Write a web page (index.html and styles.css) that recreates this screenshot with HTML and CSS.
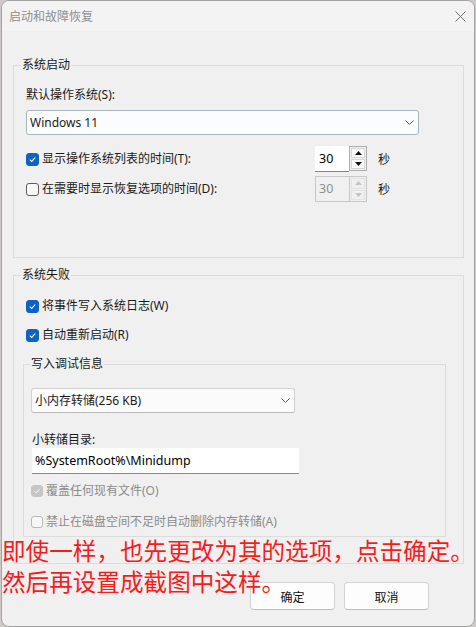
FILE: index.html
```html
<!DOCTYPE html>
<html lang="zh-CN">
<head>
<meta charset="utf-8">
<title>启动和故障恢复</title>
<link rel="stylesheet" href="styles.css">
</head>
<body>
<div class="window">
  <div class="titlebar">
    <span class="title">启动和故障恢复</span>
    <svg class="close" width="11" height="11" viewBox="0 0 11 11"><path d="M0.5 0.5 L10.5 10.5 M10.5 0.5 L0.5 10.5" stroke="#707070" stroke-width="1" fill="none"/></svg>
  </div>
  <div class="content">
    <div class="group g1">
      <div class="gtitle">系统启动</div>
      <div class="label lbl-os">默认操作系统(S):</div>
      <div class="combo combo-os">
        <span>Windows 11</span>
        <svg class="chev" width="9" height="5" viewBox="0 0 9 5"><path d="M0.5 0.5 L4.5 4.5 L8.5 0.5" stroke="#555" stroke-width="1" fill="none"/></svg>
      </div>
      <div class="timer-row r1">
        <div class="check tcheck">
          <span class="box checked"><svg width="13" height="13" viewBox="0 0 13 13"><path d="M3.3 6.7 L5.5 8.8 L9.7 4.4" stroke="#fff" stroke-width="1.2" fill="none"/></svg></span>
          <span>显示操作系统列表的时间(T):</span>
        </div>
        <div class="spin">
          <span class="spin-val">30</span>
          <span class="spin-btns">
            <span class="sb"><svg width="7" height="4" viewBox="0 0 7 4"><polygon points="0,4 3.5,0 7,4" fill="#111"/></svg></span>
            <span class="sb"><svg width="7" height="4" viewBox="0 0 7 4"><polygon points="0,0 3.5,4 7,0" fill="#111"/></svg></span>
          </span>
        </div>
        <span class="unit">秒</span>
      </div>
      <div class="timer-row r2">
        <div class="check tcheck">
          <span class="box"></span>
          <span>在需要时显示恢复选项的时间(D):</span>
        </div>
        <div class="spin spin-off">
          <span class="spin-val">30</span>
          <span class="spin-btns">
            <span class="sb"><svg width="7" height="4" viewBox="0 0 7 4"><polygon points="0,4 3.5,0 7,4" fill="#c4c4c4"/></svg></span>
            <span class="sb"><svg width="7" height="4" viewBox="0 0 7 4"><polygon points="0,0 3.5,4 7,0" fill="#c4c4c4"/></svg></span>
          </span>
        </div>
        <span class="unit">秒</span>
      </div>
    </div>

    <div class="group g2">
      <div class="gtitle">系统失败</div>
      <div class="check frow rw">
        <span class="box checked"><svg width="13" height="13" viewBox="0 0 13 13"><path d="M3.3 6.7 L5.5 8.8 L9.7 4.4" stroke="#fff" stroke-width="1.2" fill="none"/></svg></span>
        <span>将事件写入系统日志(W)</span>
      </div>
      <div class="check frow rr">
        <span class="box checked"><svg width="13" height="13" viewBox="0 0 13 13"><path d="M3.3 6.7 L5.5 8.8 L9.7 4.4" stroke="#fff" stroke-width="1.2" fill="none"/></svg></span>
        <span>自动重新启动(R)</span>
      </div>
      <div class="group g3">
        <div class="gtitle">写入调试信息</div>
        <div class="combo combo-dump">
          <span>小内存转储(256 KB)</span>
          <svg class="chev" width="9" height="5" viewBox="0 0 9 5"><path d="M0.5 0.5 L4.5 4.5 L8.5 0.5" stroke="#555" stroke-width="1" fill="none"/></svg>
        </div>
        <div class="label lbl-dir">小转储目录:</div>
        <div class="textbox">%SystemRoot%\Minidump</div>
        <div class="check disabled drow d1">
          <span class="box checked-off"><svg width="12" height="12" viewBox="0 0 12 12"><path d="M3 6.2 L5 8.2 L9 4" stroke="#fff" stroke-width="1.2" fill="none"/></svg></span>
          <span>覆盖任何现有文件(O)</span>
        </div>
        <div class="check disabled drow d2">
          <span class="box box-off"></span>
          <span>禁止在磁盘空间不足时自动删除内存转储(A)</span>
        </div>
      </div>
    </div>

    <div class="buttons">
      <button class="btn">确定</button>
      <button class="btn">取消</button>
    </div>
  </div>
  <div class="note">即使一样，也先更改为其的选项，点击确定。<br>然后再设置成截图中这样。</div>
</div>
</body>
</html>
```
FILE: styles.css
```css
html, body {
  margin: 0;
  padding: 0;
}
body {
  background: #cfc9c9;
  font-family: "Noto Sans", "Noto Sans CJK SC", sans-serif;
  font-size: 12px;
  line-height: 16px;
  color: #1a1a1a;
  width: 476px;
  height: 627px;
  overflow: hidden;
}
.window {
  position: relative;
  box-sizing: border-box;
  margin-left: 1px;
  width: 474px;
  height: 627px;
  border: 1px solid #a3a3a3;
  border-radius: 8px;
  background: #f0f0f0;
  overflow: hidden;
}
.titlebar {
  height: 30px;
  background: #f3f3f3;
  display: flex;
  align-items: center;
  justify-content: space-between;
  padding-left: 7px;
  padding-right: 8px;
}
.title {
  color: #8f8f8f;
  font-family: "Noto Sans CJK SC", sans-serif;
}
.close {
  display: block;
  margin-top: 0;
}
.content {
  padding-left: 11px;
}
.group {
  box-sizing: border-box;
  border: 1px solid #dcdcdc;
}
.gtitle {
  width: fit-content;
  margin-top: -9px;
  padding: 0 1px;
  background: #f0f0f0;
  height: 16px;
  line-height: 16px;
}
.g1 {
  margin-top: 34px;
  width: 451px;
  padding: 0 12px 55px 12px;
}
.g1 > .gtitle { margin-left: -5px; }
.lbl-os { margin-top: 14px; }
.combo {
  box-sizing: border-box;
  height: 25px;
  display: flex;
  align-items: center;
  justify-content: space-between;
  padding-left: 3px;
  border-radius: 3px;
}
.combo-os {
  margin-top: 7px;
  width: 393px;
  background: #fbfcfd;
  border: 1px solid #a9b4c2;
  padding-right: 4px;
}
.combo-dump {
  margin-top: 16px;
  width: 264px;
  background: #fbfbfb;
  border: 1px solid #d2d2d2;
  border-bottom-color: #b9b9b9;
  padding-left: 3px;
  padding-right: 4px;
}
.chev { display: block; }
.timer-row {
  display: flex;
  align-items: center;
  height: 26px;
}
.r1 { margin-top: 11px; }
.r2 { margin-top: 4px; }
.tcheck { width: 289px; }
.check {
  display: flex;
  align-items: center;
  gap: 3px;
}
.box {
  box-sizing: border-box;
  width: 13px;
  height: 13px;
  border-radius: 3px;
  border: 1px solid #5c5c5c;
  background: #f7f7f7;
  display: flex;
  align-items: center;
  justify-content: center;
  flex: none;
}
.box svg { display: block; }
.box.checked {
  background: #0b63c4;
  border-color: #0b63c4;
}
.box.checked-off {
  width: 12px;
  height: 12px;
  background: #c6c6c6;
  border-color: #c6c6c6;
}
.box.box-off {
  width: 12px;
  height: 12px;
  border-color: #b8b8b8;
  background: #f7f7f7;
}
.spin {
  display: flex;
  height: 26px;
  box-sizing: border-box;
}
.spin-val {
  box-sizing: border-box;
  width: 34px;
  height: 26px;
  background: #ffffff;
  border-bottom: 1px solid #858585;
  padding-left: 4px;
  line-height: 25px;
  font-size: 12.5px;
  color: #000;
}
.spin-btns {
  box-sizing: border-box;
  width: 18px;
  height: 25px;
  border: 1px solid #adadad;
  background: #f0f0f0;
  display: flex;
  flex-direction: column;
  padding: 1px;
  gap: 1px;
}
.sb {
  flex: 1;
  box-sizing: border-box;
  background: #f9f9f9;
  border: 1px solid #d6d6d6;
  display: flex;
  align-items: center;
  justify-content: center;
}
.sb svg { display: block; }
.spin-off {
  border: 1px solid #c8c8c8;
}
.spin-off .spin-val {
  width: 33px;
  height: 24px;
  background: #f0f0f0;
  border-bottom: none;
  line-height: 24px;
  padding-left: 3px;
  color: #8f8f8f;
}
.spin-off .spin-btns {
  height: 24px;
  border: none;
  border-left: 1px solid #c8c8c8;
  width: 17px;
}
.spin-off .sb {
  border-color: #e2e2e2;
  background: #f0f0f0;
}
.unit {
  margin-left: 11px;
  font-family: "Noto Sans CJK SC", sans-serif;
}
.g2 {
  margin-top: 17px;
  width: 451px;
  padding: 0 0 26px 9px;
}
.g2 > .gtitle { margin-left: -2px; }
.frow {
  height: 20px;
  padding-left: 3px;
}
.rw { margin-top: 13px; }
.rr { margin-top: 9px; }
.g3 {
  margin-top: 19px;
  width: 423px;
  padding: 0 0 4px 7px;
}
.g3 > .gtitle { margin-left: -1px; }
.lbl-dir {
  margin-top: 19px;
  margin-left: 1px;
}
.textbox {
  box-sizing: border-box;
  margin-left: 1px;
  width: 267px;
  height: 26px;
  background: #ffffff;
  border-bottom: 1px solid #8a8a8a;
  padding-left: 3px;
  line-height: 25px;
  font-size: 12.5px;
  color: #000;
}
.drow { height: 20px; }
.disabled { color: #8c8c8c; }
.d1 { margin-top: 7px; }
.d2 { margin-top: 11px; }
.buttons {
  display: flex;
  justify-content: flex-end;
  gap: 9px;
  margin-top: 18px;
  padding-right: 45px;
}
.btn {
  box-sizing: border-box;
  width: 85px;
  height: 28px;
  border: 1px solid #d3d3d3;
  border-bottom-color: #bdbdbd;
  border-radius: 4px;
  background: #fdfdfd;
  font-family: "Noto Sans CJK SC", sans-serif;
  font-size: 12px;
  color: #111;
  padding: 0;
}
.note {
  position: absolute;
  left: 0;
  top: 534px;
  font-family: "Noto Sans CJK SC", sans-serif;
  font-size: 23.6px;
  line-height: 31px;
  color: #f51c1c;
  white-space: nowrap;
}
```
